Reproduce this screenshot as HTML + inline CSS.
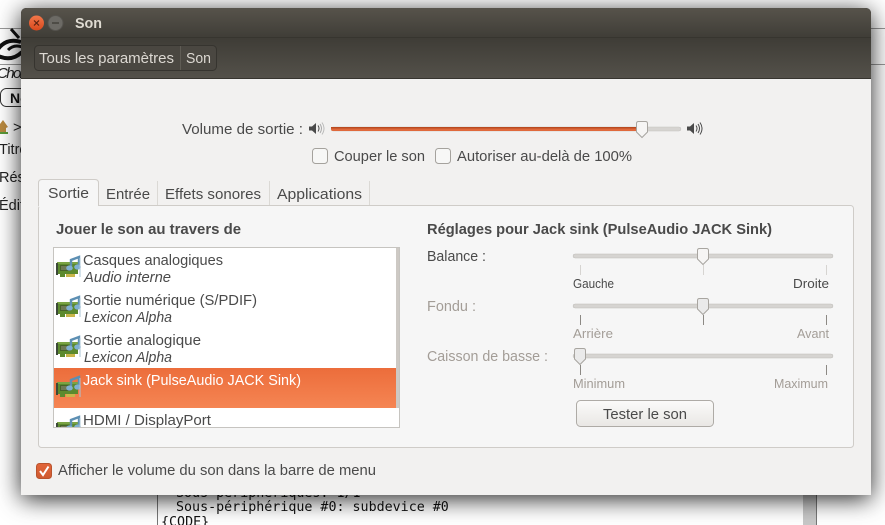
<!DOCTYPE html>
<html><head><meta charset="utf-8"><title>Son</title>
<style>
html,body{margin:0;padding:0;background:#fff;width:885px;height:525px;overflow:hidden}
svg{display:block;position:absolute;left:0;top:0}
text{font-family:"Liberation Sans",sans-serif;font-size:14.7px;fill:#4a4a4a}
.b{font-weight:bold}
.t{font-size:12.6px}
.d{fill:#a39d97}
.i{font-style:italic}
.m{font-family:"DejaVu Sans Mono",monospace;font-size:13.33px;fill:#111}
.hd{fill:#dcd8d2}
</style></head><body>
<svg width="885" height="525" viewBox="0 0 885 525" xmlns="http://www.w3.org/2000/svg">
<defs>
<linearGradient id="hg" x1="0" y1="0" x2="0" y2="1"><stop offset="0" stop-color="#57534b"/><stop offset=".4" stop-color="#403e38"/><stop offset=".41" stop-color="#3e3c36"/><stop offset="1" stop-color="#54514a"/></linearGradient>
<linearGradient id="sel" x1="0" y1="0" x2="0" y2="1"><stop offset="0" stop-color="#ec6d3b"/><stop offset="1" stop-color="#f58553"/></linearGradient>
<linearGradient id="cl" x1="0" y1="0" x2="0" y2="1"><stop offset="0" stop-color="#f2774a"/><stop offset="1" stop-color="#d9481c"/></linearGradient>
<linearGradient id="btn" x1="0" y1="0" x2="0" y2="1"><stop offset="0" stop-color="#fbfbfa"/><stop offset="1" stop-color="#e9e7e4"/></linearGradient>
<linearGradient id="chk" x1="0" y1="0" x2="0" y2="1"><stop offset="0" stop-color="#e2653a"/><stop offset="1" stop-color="#cf5a30"/></linearGradient>
<symbol id="card" viewBox="0 0 25 24" overflow="visible">
<path d="M1 6H22V18H9V21H4V18H1Z" fill="#5c8a2e"/>
<path d="M1 6H22V8H1Z" fill="#7aa344"/>
<rect x="4" y="9" width="11" height="6" fill="#47632a"/>
<rect x="5" y="10" width="9" height="4" fill="#6e7a55"/>
<rect x="0" y="7" width="2" height="12" fill="#3d4a38"/>
<path d="M10 18H19V21H10Z" fill="#c9b64a"/>
<path d="M15 10V4L23 1V11" fill="none" stroke="#5d8fb3" stroke-width="2.400"/>
<ellipse cx="13.500" cy="12" rx="3.300" ry="2.600" fill="#7fb0d1"/>
<ellipse cx="21.500" cy="11" rx="3.300" ry="2.600" fill="#7fb0d1"/>
<path d="M24 2V21" stroke="#a9c4d6" stroke-width="1"/>
</symbol>
<symbol id="hnd" viewBox="0 0 14 18" overflow="visible">
<path d="M1.500 2.500Q1.500 .5 3.500 .5H10.500Q12.500 .5 12.500 2.500V11L7 16.500L1.500 11Z" fill="currentColor" stroke="#a8a5a0"/>
</symbol>
</defs>

<!-- background page -->
<rect width="885" height="525" fill="#fff"/>
<rect x="0" y="28" width="22" height="1" fill="#999"/>
<rect x="871" y="28" width="14" height="1" fill="#999"/>
<rect x="0" y="64" width="22" height="1" fill="#999"/>
<rect x="871" y="64" width="14" height="1" fill="#999"/>
<path d="M-4 52Q5 37 21 42" fill="none" stroke="#111" stroke-width="4"/>
<path d="M-2 56Q12 62 22 52" fill="none" stroke="#111" stroke-width="4"/>
<path d="M8 50Q14 44 22 47" fill="none" stroke="#111" stroke-width="3"/>
<path d="M11 29L19 38" stroke="#111" stroke-width="3"/>
<text x="-3" y="78" class="i" style="fill:#222;font-size:15px" textLength="26">Choi</text>
<rect x="0.500" y="88.500" width="40" height="18" rx="6" fill="#fff" stroke="#333"/>
<text x="10" y="103" class="b" style="fill:#111;font-size:14px">No</text>
<path d="M0 124L3 120L8 127L6 128V133H0Z" fill="#b9893f"/><rect x="0" y="132" width="8" height="2" fill="#5a9a3a"/>
<text x="13" y="132" style="fill:#222">&gt;</text>
<text x="-1" y="154" style="fill:#222;font-size:14.500px">Titre</text>
<text x="-1" y="182" style="fill:#222;font-size:14.500px">Rés</text>
<text x="-1" y="210" style="fill:#222;font-size:14.500px">Édit</text>
<rect x="157" y="495" width="1" height="30" fill="#777"/>
<rect x="803" y="495" width="13" height="30" fill="#c8c8c8"/>
<rect x="816" y="495" width="1" height="30" fill="#777"/>
<text x="176" y="497" class="m">Sous-périphériques: 1/1</text>
<text x="176" y="511" class="m">Sous-périphérique #0: subdevice #0</text>
<text x="161" y="526" class="m">{CODE}</text>

<!-- window -->
<path d="M21 14Q21 8 27 8H865Q871 8 871 14V495H21Z" fill="#000" style="filter:drop-shadow(0 4px 12px rgba(0,0,0,.85))"/>
<path d="M21 14Q21 8 27 8H865Q871 8 871 14V79H21Z" fill="url(#hg)"/>
<rect x="21" y="37" width="850" height="1" fill="#37352f"/>
<rect x="21" y="78" width="850" height="1" fill="#37352f"/>
<rect x="21" y="79" width="850" height="416" fill="#f2f1f0"/>

<!-- titlebar -->
<circle cx="36.500" cy="23" r="7.500" fill="url(#cl)"/>
<path d="M34 20.500L39 25.500M39 20.500L34 25.500" stroke="#5c2210" stroke-width="1.200"/>
<circle cx="55.500" cy="23" r="7.500" fill="#6c6a65" stroke="#55534e"/>
<path d="M52 23H59" stroke="#3a3833" stroke-width="1.200"/>
<text x="75" y="28" class="b" textLength="27" lengthAdjust="spacingAndGlyphs" style="fill:#dfdbd2">Son</text>

<!-- toolbar -->
<rect x="34.500" y="45.500" width="182" height="25" rx="4" fill="#4a4741" stroke="#36342f"/>
<rect x="180" y="46" width="1" height="24" fill="#5f5c55"/>
<text x="39" y="63" class="hd" textLength="135" lengthAdjust="spacingAndGlyphs">Tous les paramètres</text>
<text x="186" y="63" class="hd" textLength="25" lengthAdjust="spacingAndGlyphs">Son</text>

<!-- volume -->
<text x="182" y="134" textLength="121" lengthAdjust="spacingAndGlyphs">Volume de sortie :</text>
<path d="M309 126.500H312L316 123V134L312 130.500H309Z" fill="#4a4a4a"/>
<path d="M318 125.500Q320 128.500 318 131.500" fill="none" stroke="#4a4a4a"/>
<path d="M320 124Q323 128.500 320 133" fill="none" stroke="#aaa"/>
<path d="M322 122.500Q326 128.500 322 134.500" fill="none" stroke="#bbb"/>
<rect x="331" y="127" width="350" height="4" rx="2" fill="#d6d4d1" stroke="#c4c2bf" stroke-width=".5"/>
<rect x="331" y="127" width="311" height="4" rx="2" fill="#e0693c"/>
<rect x="331" y="127" width="311" height="1.500" fill="#b94a20"/>
<use href="#hnd" x="635" y="121" width="14" height="18" style="color:#f6f5f4"/>
<path d="M687 126.500H690L694 123V134L690 130.500H687Z" fill="#4a4a4a"/>
<path d="M696 125.500Q698 128.500 696 131.500" fill="none" stroke="#4a4a4a"/>
<path d="M698 124Q701 128.500 698 133" fill="none" stroke="#4a4a4a"/>
<path d="M700 122.500Q704 128.500 700 134.500" fill="none" stroke="#4a4a4a"/>

<rect x="312.500" y="148.500" width="15" height="15" rx="3" fill="#f7f7f6" stroke="#a5a29d"/>
<text x="334" y="161" textLength="91" lengthAdjust="spacingAndGlyphs">Couper le son</text>
<rect x="435.500" y="148.500" width="15" height="15" rx="3" fill="#f7f7f6" stroke="#a5a29d"/>
<text x="457" y="161" textLength="175" lengthAdjust="spacingAndGlyphs">Autoriser au-delà de 100%</text>

<!-- panel and tabs -->
<rect x="38.500" y="205.500" width="815" height="242" rx="3" fill="#f6f6f6" stroke="#cfccc8"/>
<path d="M38.500 206V183Q38.500 179.500 42 179.500H95Q98.500 179.500 98.500 183V206" fill="#f6f6f6" stroke="#cfccc8"/>
<rect x="39" y="204" width="59" height="3" fill="#f6f6f6"/>
<rect x="157" y="181" width="1" height="24" fill="#dbd9d5"/>
<rect x="269" y="181" width="1" height="24" fill="#dbd9d5"/>
<rect x="369" y="181" width="1" height="24" fill="#dbd9d5"/>
<text x="48" y="198" textLength="41" lengthAdjust="spacingAndGlyphs">Sortie</text>
<text x="106" y="199" textLength="44" lengthAdjust="spacingAndGlyphs">Entrée</text>
<text x="165" y="199" textLength="96" lengthAdjust="spacingAndGlyphs">Effets sonores</text>
<text x="277" y="199" textLength="85" lengthAdjust="spacingAndGlyphs">Applications</text>

<!-- list -->
<text x="56" y="234" class="b" textLength="185" lengthAdjust="spacingAndGlyphs">Jouer le son au travers de</text>
<rect x="53.500" y="247.500" width="346" height="180" fill="#fff" stroke="#c6c4c0"/>
<rect x="396" y="248" width="3" height="160" fill="#cdc9c4"/>
<rect x="54" y="368" width="342" height="40" fill="url(#sel)"/>
<use href="#card" x="56" y="256" width="25" height="24"/>
<use href="#card" x="56" y="296" width="25" height="24"/>
<use href="#card" x="56" y="336" width="25" height="24"/>
<use href="#card" x="56" y="376" width="25" height="24"/>
<svg x="54" y="408" width="342" height="19"><use href="#card" x="2" y="8" width="25" height="24"/></svg>
<text x="83" y="265" textLength="140" lengthAdjust="spacingAndGlyphs">Casques analogiques</text>
<text x="84" y="282" class="i" textLength="87" lengthAdjust="spacingAndGlyphs">Audio interne</text>
<text x="83" y="305" textLength="174" lengthAdjust="spacingAndGlyphs">Sortie numérique (S/PDIF)</text>
<text x="84" y="322" class="i" textLength="88" lengthAdjust="spacingAndGlyphs">Lexicon Alpha</text>
<text x="83" y="345" textLength="118" lengthAdjust="spacingAndGlyphs">Sortie analogique</text>
<text x="84" y="362" class="i" textLength="88" lengthAdjust="spacingAndGlyphs">Lexicon Alpha</text>
<text x="83" y="385" textLength="218" lengthAdjust="spacingAndGlyphs" style="fill:#fff">Jack sink (PulseAudio JACK Sink)</text>
<text x="83" y="425" textLength="128" lengthAdjust="spacingAndGlyphs">HDMI / DisplayPort</text>

<!-- right column -->
<text x="427" y="234" class="b" textLength="345" lengthAdjust="spacingAndGlyphs">Réglages pour Jack sink (PulseAudio JACK Sink)</text>
<text x="427" y="261" textLength="59" lengthAdjust="spacingAndGlyphs">Balance :</text>
<rect x="573" y="254" width="260" height="4" rx="2" fill="#d6d4d1" stroke="#bdbbb8" stroke-width=".5"/>
<use href="#hnd" x="696" y="248" width="14" height="18" style="color:#f6f5f4"/>
<path d="M580.500 265V275M703.500 265V275M826.500 265V275" stroke="#d6d4d1"/>
<text x="573" y="288" class="t" textLength="41" lengthAdjust="spacingAndGlyphs">Gauche</text>
<text x="793" y="288" class="t" textLength="36" lengthAdjust="spacingAndGlyphs">Droite</text>

<text x="427" y="311" class="d" textLength="49" lengthAdjust="spacingAndGlyphs">Fondu :</text>
<rect x="573" y="304" width="260" height="4" rx="2" fill="#d6d4d1" stroke="#bdbbb8" stroke-width=".5"/>
<use href="#hnd" x="696" y="298" width="14" height="18" style="color:#eaeaea"/>
<path d="M580.500 315V325M703.500 315V325M826.500 315V325" stroke="#8c8984"/>
<text x="573" y="338" class="t d" textLength="40" lengthAdjust="spacingAndGlyphs">Arrière</text>
<text x="797" y="338" class="t d" textLength="32" lengthAdjust="spacingAndGlyphs">Avant</text>

<text x="427" y="361" class="d" textLength="121" lengthAdjust="spacingAndGlyphs">Caisson de basse :</text>
<rect x="573" y="354" width="260" height="4" rx="2" fill="#d6d4d1" stroke="#bdbbb8" stroke-width=".5"/>
<use href="#hnd" x="573" y="348" width="14" height="18" style="color:#eaeaea"/>
<path d="M580.500 365V375M826.500 365V375" stroke="#8c8984"/>
<text x="573" y="388" class="t d" textLength="52" lengthAdjust="spacingAndGlyphs">Minimum</text>
<text x="774" y="388" class="t d" textLength="54" lengthAdjust="spacingAndGlyphs">Maximum</text>

<rect x="576.500" y="400.500" width="137" height="26" rx="4" fill="url(#btn)" stroke="#aeaba6"/>
<text x="603" y="419" textLength="84" lengthAdjust="spacingAndGlyphs">Tester le son</text>

<!-- bottom check -->
<rect x="36.500" y="463.500" width="15" height="15" rx="3" fill="url(#chk)" stroke="#b9532d"/>
<path d="M40 471L43 475L48.500 466.500" fill="none" stroke="#fff" stroke-width="2"/>
<text x="58" y="475" textLength="318" lengthAdjust="spacingAndGlyphs">Afficher le volume du son dans la barre de menu</text>
</svg>
</body></html>
